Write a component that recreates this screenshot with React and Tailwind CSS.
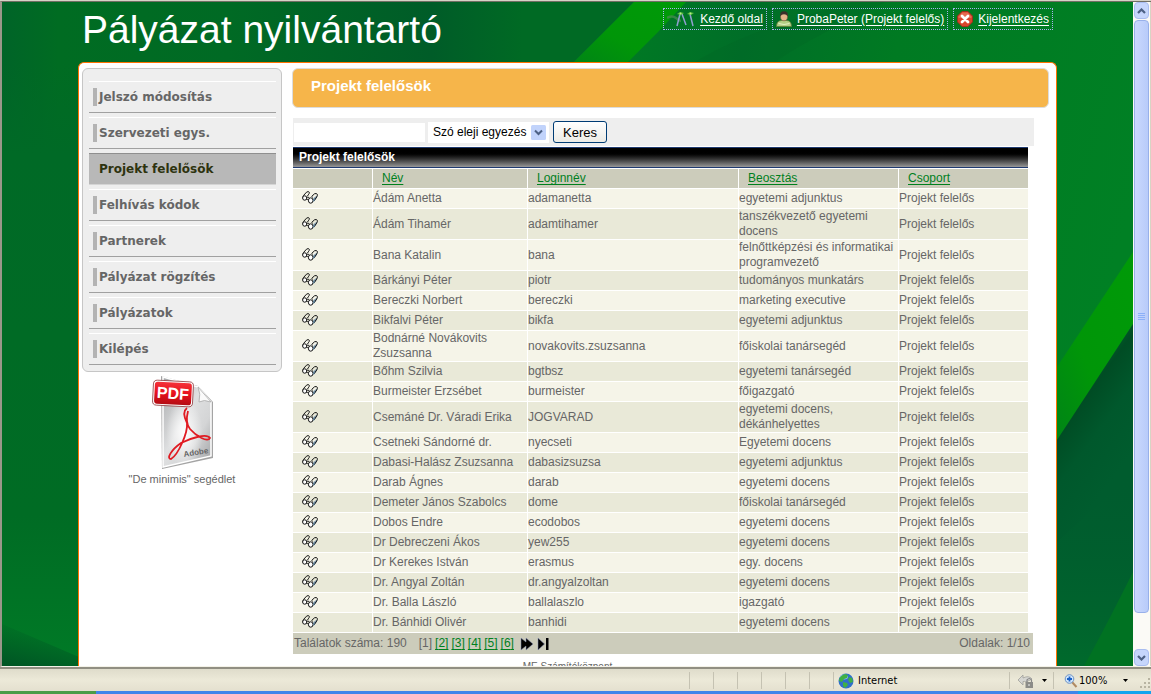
import { useState } from 'react';

const menuItems = [
  'Jelszó módosítás',
  'Szervezeti egys.',
  'Projekt felelősök',
  'Felhívás kódok',
  'Partnerek',
  'Pályázat rögzítés',
  'Pályázatok',
  'Kilépés',
];

const columns = ['Név', 'Loginnév', 'Beosztás', 'Csoport'];

const people = [
  { name: 'Ádám Anetta', login: 'adamanetta', post: 'egyetemi adjunktus' },
  { name: 'Ádám Tihamér', login: 'adamtihamer', post: 'tanszékvezető egyetemi docens' },
  { name: 'Bana Katalin', login: 'bana', post: 'felnőttképzési és informatikai programvezető' },
  { name: 'Bárkányi Péter', login: 'piotr', post: 'tudományos munkatárs' },
  { name: 'Bereczki Norbert', login: 'bereczki', post: 'marketing executive' },
  { name: 'Bikfalvi Péter', login: 'bikfa', post: 'egyetemi adjunktus' },
  { name: 'Bodnárné Novákovits Zsuzsanna', login: 'novakovits.zsuzsanna', post: 'főiskolai tanársegéd' },
  { name: 'Bőhm Szilvia', login: 'bgtbsz', post: 'egyetemi tanársegéd' },
  { name: 'Burmeister Erzsébet', login: 'burmeister', post: 'főigazgató' },
  { name: 'Csemáné Dr. Váradi Erika', login: 'JOGVARAD', post: 'egyetemi docens, dékánhelyettes' },
  { name: 'Csetneki Sándorné dr.', login: 'nyecseti', post: 'Egyetemi docens' },
  { name: 'Dabasi-Halász Zsuzsanna', login: 'dabasizsuzsa', post: 'egyetemi adjunktus' },
  { name: 'Darab Ágnes', login: 'darab', post: 'egyetemi docens' },
  { name: 'Demeter János Szabolcs', login: 'dome', post: 'főiskolai tanársegéd' },
  { name: 'Dobos Endre', login: 'ecodobos', post: 'egyetemi docens' },
  { name: 'Dr Debreczeni Ákos', login: 'yew255', post: 'egyetemi docens' },
  { name: 'Dr Kerekes István', login: 'erasmus', post: 'egy. docens' },
  { name: 'Dr. Angyal Zoltán', login: 'dr.angyalzoltan', post: 'egyetemi docens' },
  { name: 'Dr. Balla László', login: 'ballalaszlo', post: 'igazgató' },
  { name: 'Dr. Bánhidi Olivér', login: 'banhidi', post: 'egyetemi docens' },
];

function LeafBackground() {
  return (
    <svg
      className="absolute inset-0 w-full h-full"
      viewBox="0 0 1131 664"
      preserveAspectRatio="none"
      aria-hidden="true"
    >
      <defs>
        <linearGradient id="base" x1="0" y1="0" x2="1" y2="0">
          <stop offset="0" stopColor="#006428" />
          <stop offset="0.05" stopColor="#006c22" />
          <stop offset="0.2" stopColor="#006a24" />
          <stop offset="0.38" stopColor="#005c28" />
          <stop offset="0.46" stopColor="#006a24" />
        </linearGradient>
        <linearGradient id="leftSide" x1="0" y1="0" x2="0" y2="1">
          <stop offset="0" stopColor="#006a26" stopOpacity="0" />
          <stop offset="0.15" stopColor="#006a26" />
          <stop offset="0.75" stopColor="#006c24" />
          <stop offset="1" stopColor="#007a26" />
        </linearGradient>
        <linearGradient id="right" x1="0" y1="0" x2="1" y2="0.3">
          <stop offset="0" stopColor="#007f22" />
          <stop offset="0.3" stopColor="#006e28" />
          <stop offset="0.55" stopColor="#007a22" />
          <stop offset="1" stopColor="#008024" />
        </linearGradient>
        <linearGradient id="blade" x1="1" y1="0" x2="0" y2="1">
          <stop offset="0" stopColor="#009a08" />
          <stop offset="0.6" stopColor="#009608" />
          <stop offset="1" stopColor="#008416" />
        </linearGradient>
        <linearGradient id="shade" gradientUnits="userSpaceOnUse" x1="1050" y1="390" x2="1131" y2="450">
          <stop offset="0" stopColor="#00762a" />
          <stop offset="0.3" stopColor="#004c24" />
          <stop offset="0.6" stopColor="#00582c" />
          <stop offset="1" stopColor="#005c2e" />
        </linearGradient>
        <linearGradient id="low" x1="0" y1="0" x2="0" y2="1">
          <stop offset="0" stopColor="#005c2e" stopOpacity="0" />
          <stop offset="1" stopColor="#006a2c" />
        </linearGradient>
        <linearGradient id="corner" x1="0" y1="1" x2="0.4" y2="0">
          <stop offset="0" stopColor="#005424" />
          <stop offset="1" stopColor="#005424" stopOpacity="0" />
        </linearGradient>
      </defs>
      <rect width="1131" height="664" fill="url(#base)" />
      <rect y="62" width="77" height="602" fill="url(#leftSide)" />
      <path d="M0 622L77 655V664H0z" fill="url(#corner)" />
      <path d="M632 0H1131V664H1055V62H570z" fill="url(#right)" />
      <path d="M632 0H684L656 30L624 62H570z" fill="url(#blade)" />
      <path d="M690 62Q740 30 850 0H884Q800 40 770 62z" fill="#006824" opacity="0.35" />
      <path d="M1131 250V322L1055 440V365z" fill="url(#blade)" />
      <path d="M1131 322V664H1055V438z" fill="url(#shade)" />
      <path d="M1131 470V664H1055V540z" fill="url(#low)" />
      <path d="M1131 570V664H1082Q1102 628 1131 570z" fill="#007222" />
    </svg>
  );
}

function PathIcon() {
  return (
    <svg className="w-7 h-4" viewBox="0 0 28 16" aria-hidden="true">
      <path d="M0 7Q5 4 9 7T14 10" stroke="#4d8a55" strokeWidth="2.500" fill="none" opacity="0.7" />
      <path d="M13 3L10 15M15 3L19 14M23 3L26 15" stroke="#8f9fcf" strokeWidth="1.500" fill="none" />
      <path d="M10 3l3-2 4 1-3 2zM20 3l3-2 4 1-3 2z" fill="#59bf3c" />
      <circle cx="13.500" cy="2.500" r="1" fill="#b7ee8b" />
      <circle cx="23.500" cy="2.500" r="1" fill="#b7ee8b" />
    </svg>
  );
}

function UserIcon() {
  return (
    <svg className="w-4 h-4" viewBox="0 0 16 16" aria-hidden="true">
      <path d="M.500 15.500q0-6 5-6h5q5 0 5 6z" fill="#b3cf86" stroke="#5d7d3a" strokeWidth="0.8" />
      <path d="M2.500 12.500q5.500 2 11 0" stroke="#e4f0c6" fill="none" />
      <ellipse cx="8" cy="5.500" rx="3.500" ry="4.300" fill="#e3b58a" stroke="#7b5a3c" strokeWidth="0.6" />
      <path d="M4.200 5.500Q3.500 .3 8 .3T11.800 5.500Q10.500 3.300 8 3.300T4.200 5.500z" fill="#38302b" />
    </svg>
  );
}

function LogoutIcon() {
  return (
    <svg className="w-4 h-4" viewBox="0 0 16 16" aria-hidden="true">
      <path d="M5 .5h6L15.500 5v6L11 15.500H5L.5 11V5z" fill="#d9442c" stroke="#a22a1c" strokeWidth="0.8" />
      <path d="M5.300 1.500h5.400L14.500 5.400V7h-13V5.400z" fill="#ea7a62" opacity="0.7" />
      <path d="M5 5l6 6M11 5l-6 6" stroke="#fff" strokeWidth="2.800" strokeLinecap="round" />
    </svg>
  );
}

function GlassesIcon() {
  return (
    <svg className="w-4 h-[13px]" viewBox="0 0 16 13" aria-hidden="true">
      <path d="M11.500 7l3.500-2.500v2L12 10.500z" fill="#8aa5b8" />
      <path
        d="M.700 6.500L1.500 4.500L4.500 1.200Q6.500-.2 7.300 1.300Q7.500 2.500 6.300 3.800L5.500 5M10.500 6.500L9.800 5.300L12.500 2.800Q14.500 2 15.300 3.300Q15.700 4.800 14.700 6L12 10"
        fill="none"
        stroke="#111"
      />
      <ellipse cx="2.700" cy="7" rx="2.100" ry="2.200" fill="#fff" stroke="#111" />
      <ellipse cx="8.700" cy="9.500" rx="2.300" ry="2.700" fill="#fff" stroke="#111" />
      <path d="M4.700 6.500Q6.500 5 7.200 7.200M4.500 8.500Q5.800 8 6.500 9.500" stroke="#111" strokeWidth="0.9" fill="none" />
      <path d="M11 8l1.800-1v2.500l-1.800 1.500z" fill="#5e7c90" />
    </svg>
  );
}

function PdfIcon() {
  return (
    <svg className="w-[64px] h-[94px]" viewBox="0 0 64 94" aria-hidden="true">
      <defs>
        <linearGradient id="page" x1="0" y1="0" x2="1" y2="1">
          <stop offset="0" stopColor="#a4a6a8" />
          <stop offset="0.45" stopColor="#dfe0e1" />
          <stop offset="0.7" stopColor="#d4d5d6" />
          <stop offset="1" stopColor="#9c9ea0" />
        </linearGradient>
        <radialGradient id="glow" cx="0.45" cy="0.62" r="0.38">
          <stop offset="0" stopColor="#fff" />
          <stop offset="1" stopColor="#fff" stopOpacity="0" />
        </radialGradient>
        <linearGradient id="tag" x1="0" y1="0" x2="0" y2="1">
          <stop offset="0" stopColor="#f4323a" />
          <stop offset="0.5" stopColor="#e8101c" />
          <stop offset="1" stopColor="#b30d14" />
        </linearGradient>
      </defs>
      <path d="M11 1L48 11L63 27V83L12 94z" fill="#7e7e7e" opacity="0.7" />
      <path d="M13 2L48 12L61 27V81L13 92z" fill="url(#page)" stroke="#fff" strokeWidth="1.500" />
      <path d="M13 2L48 12L61 27V81L13 92z" fill="url(#glow)" />
      <path d="M48 12L61 27Q54 24 49 27Q51 19 48 12z" fill="#fafafa" stroke="#a9a9a9" strokeWidth="0.8" />
      <path
        d="M37 33C33 36 34 42 37 48C38 58 28 80 21 84C16 84 21 75 31 68C41 63 57 58 60 63C58 68 46 61 40 54C35 48 37 40 38 36"
        fill="none"
        stroke="#e01b22"
        strokeWidth="1.800"
      />
      <rect x="3" y="6" width="40" height="25" rx="4" transform="rotate(3 23 18)" fill="#fff" stroke="#7d1b1e" strokeWidth="0.7" />
      <rect x="4.500" y="7.500" width="37" height="22" rx="3" transform="rotate(3 23 18)" fill="url(#tag)" />
      <text x="7" y="24" fontSize="16" fontWeight="bold" fill="#fff" transform="rotate(4 23 18)" fontFamily="Liberation Sans, sans-serif">
        PDF
      </text>
      <text x="34" y="82" fontSize="8" fontWeight="bold" fill="#666" transform="rotate(-9 34 82)" fontFamily="Liberation Sans, sans-serif">
        Adobe
      </text>
    </svg>
  );
}

function TopLink({ icon, children }) {
  return (
    <a
      href="#"
      className="flex items-center h-[22px] px-[3px] gap-[5px] border border-dotted border-[#a8b4f0] text-white whitespace-nowrap"
    >
      {icon}
      <span className="underline underline-offset-2">{children}</span>
    </a>
  );
}

function Sidebar() {
  return (
    <aside className="w-[200px] shrink-0">
      <nav className="rounded-md border border-[#c6c6c6] bg-[#eeeeee] pl-[6px] pr-[5px] pt-3 pb-[6px]">
        <ul className="flex flex-col gap-1 font-['DejaVu_Sans',sans-serif] text-[12px] font-bold">
          {menuItems.map((item) => {
            const active = item === 'Projekt felelősök';
            return (
              <li key={item}>
                <a
                  href="#"
                  className={
                    active
                      ? 'flex items-center h-8 pl-[10px] border-t border-b border-t-[#8f8f8f] border-b-[#d5d5d5] bg-[#b8b8b8] text-[#2e330f]'
                      : 'flex items-center h-8 pl-1 border-t border-b border-t-white border-b-[#a0a0a0] text-[#666666]'
                  }
                >
                  {!active && <span className="w-1 h-[18px] mr-[2px] bg-[#b3b3b3]" />}
                  {item}
                </a>
              </li>
            );
          })}
        </ul>
      </nav>
      <a href="#" className="flex flex-col items-center pt-[3px] text-[11px] text-[#666666]">
        <PdfIcon />
        <span className="leading-[20px]">"De minimis" segédlet</span>
      </a>
    </aside>
  );
}

function SearchBar() {
  const [query, setQuery] = useState('');

  return (
    <form className="flex items-center h-7 bg-[#eeeeee] pl-px text-black text-[13px]" onSubmit={(e) => e.preventDefault()}>
      <input
        type="text"
        aria-label="Keresés"
        className="w-[131px] h-[19px] px-1 bg-white outline-none"
        value={query}
        onChange={(e) => setQuery(e.target.value)}
      />
      <div className="relative ml-[3px]">
        <select
          aria-label="Egyezés módja"
          className="block w-[121px] h-[21px] pl-[5px] appearance-none bg-white text-[12px] outline-none"
        >
          <option>Szó eleji egyezés</option>
        </select>
        <svg className="absolute right-[3px] top-[3px] w-[15px] h-[15px] pointer-events-none" viewBox="0 0 15 15" aria-hidden="true">
          <rect width="15" height="15" rx="1.500" fill="#c1d3fb" />
          <path d="M4 5.500L7.500 9L11 5.500" fill="none" stroke="#4d6185" strokeWidth="2" />
        </svg>
      </div>
      <button
        type="submit"
        className="w-[54px] h-[22px] ml-1 rounded-[3px] border border-[#003c74] bg-gradient-to-b from-white to-[#ecebe5] leading-none"
      >
        Keres
      </button>
    </form>
  );
}

function PeopleTable() {
  return (
    <table className="w-full table-fixed border-separate border-spacing-0">
      <caption className="h-[21px] mb-px pl-[6px] border-y border-[#1f3a70] bg-gradient-to-b from-black from-20% to-[#999999] text-left font-bold leading-[19px] text-white">
        Projekt felelősök
      </caption>
      <colgroup>
        <col className="w-[80px]" />
        <col className="w-[155px]" />
        <col className="w-[211px]" />
        <col className="w-[160px]" />
        <col />
      </colgroup>
      <thead>
        <tr className="bg-[#ccccbb]">
          <th className="h-5 border-r border-b border-white" />
          {columns.map((column) => (
            <th
              key={column}
              className="h-5 p-0 pl-[9px] border-r border-b border-white last:border-r-0 text-left font-normal"
            >
              <a href="#" className="text-[#00801e] underline underline-offset-2">
                {column}
              </a>
            </th>
          ))}
        </tr>
      </thead>
      <tbody>
        {people.map((person) => (
          <tr key={person.login} className="odd:bg-[#f5f4e8] even:bg-[#e9e9d8]">
            <td className="h-5 p-0 pb-[2px] pl-[9px] border-r border-b border-white">
              <a href="#" aria-label={person.name} className="block w-4">
                <GlassesIcon />
              </a>
            </td>
            <td className="p-0 border-r border-b border-white">{person.name}</td>
            <td className="p-0 border-r border-b border-white">{person.login}</td>
            <td className="p-0 border-r border-b border-white">{person.post}</td>
            <td className="p-0 border-b border-white">Projekt felelős</td>
          </tr>
        ))}
      </tbody>
    </table>
  );
}

function Pager() {
  return (
    <div className="flex items-center h-[21px] mr-px pl-px pr-[3px] bg-[#ccccbb]">
      <span>Találatok száma: 190</span>
      <span className="ml-3">[1]</span>
      {[2, 3, 4, 5, 6].map((page) => (
        <a key={page} href="#" className="ml-[3px] text-[#00801e] underline underline-offset-2">
          [{page}]
        </a>
      ))}
      <a href="#" aria-label="Következő" className="ml-[6px]">
        <svg className="w-[13px] h-[14px]" viewBox="0 0 13 14">
          <path d="M1 1L6 5V1L13 7L6 13V9L1 13z" fill="#000" stroke="#8790b8" strokeWidth="0.5" />
        </svg>
      </a>
      <a href="#" aria-label="Utolsó" className="ml-[4px]">
        <svg className="w-[12px] h-[14px]" viewBox="0 0 12 14">
          <path d="M1 1L7.500 7L1 13z" fill="#000" stroke="#8790b8" strokeWidth="0.5" />
          <path d="M9 1h2.500v12H9z" fill="#000" />
        </svg>
      </a>
      <span className="ml-auto">Oldalak: 1/10</span>
    </div>
  );
}

function ScrollButton({ label, path }) {
  return (
    <button
      type="button"
      aria-label={label}
      className="flex items-center justify-center w-[15px] h-[17px] shrink-0 rounded-sm border border-[#a9bdf0] bg-[#c6d6fc]"
    >
      <svg className="w-[9px] h-[6px]" viewBox="0 0 9 6">
        <path d={path} fill="none" stroke="#4d6185" strokeWidth="2.200" />
      </svg>
    </button>
  );
}

function Scrollbar() {
  return (
    <div className="flex flex-col items-center w-[18px] shrink-0 border-r border-[#d8d4c4] bg-[#fbfaf6]">
      <ScrollButton label="Fel" path="M1 5L4.500 1.500L8 5" />
      <div className="flex-1 w-[15px] pt-px pb-9">
        <div className="flex flex-col items-center justify-center gap-px h-full rounded-sm border border-[#98b0ea] bg-gradient-to-r from-[#cad8fd] to-[#b8cbfa]">
          {[0, 1, 2, 3].map((line) => (
            <span key={line} className="w-[7px] h-px bg-[#8cb0f8]" />
          ))}
        </div>
      </div>
      <ScrollButton label="Le" path="M1 1L4.500 4.500L8 1" />
    </div>
  );
}

function DropArrow() {
  return (
    <svg className="w-[5px] h-[3px]" viewBox="0 0 5 3" aria-hidden="true">
      <path d="M0 0h5L2.500 3z" fill="#000" />
    </svg>
  );
}

function StatusBar() {
  return (
    <footer className="shrink-0 font-['DejaVu_Sans_Condensed','DejaVu_Sans',sans-serif] text-[11px] text-black">
      <div className="flex justify-end items-center h-6 pt-px border-t-2 border-[#918f82] bg-gradient-to-b from-[#dfdccb] via-[#ece9d8] to-[#e4e0cf]">
        {[0, 1, 2, 3, 4, 5].map((cell) => (
          <span key={cell} className="w-6 h-[17px] border-l border-[#c5c2b2]" />
        ))}
        <div className="flex items-center w-[176px] h-[17px] pl-1 gap-1 border-l border-[#c5c2b2]">
          <svg className="w-4 h-4" viewBox="0 0 16 16" aria-hidden="true">
            <circle cx="8" cy="8" r="7.500" fill="#2f6fcb" />
            <ellipse cx="6" cy="4" rx="4" ry="2.500" fill="#a6d0f5" opacity="0.8" />
            <path d="M7 1l3 1-1 3-3 1-2 3-3-1Q1 3 7 1zM11 4l3 1 1 4-3 1-2-3zM5 9l4 1 1 2-3 3-2-2z" fill="#3fb043" />
          </svg>
          Internet
        </div>
        <button type="button" aria-label="Védett mód" className="flex items-center w-[44px] h-[17px] pl-2 gap-2 border-l border-[#c5c2b2]">
          <svg className="w-4 h-4" viewBox="0 0 16 16" aria-hidden="true">
            <path d="M0 7l5-5v3Q11 2 14 6L8 9Q7 8 5 8.500V12z" fill="#d6d6d2" stroke="#a0a09a" strokeWidth="0.8" />
            <path d="M9 9V7q2.500-3 4.500 0v2" fill="none" stroke="#888" strokeWidth="1.200" />
            <rect x="7.500" y="9" width="7.500" height="6" fill="#8c8c88" />
            <path d="M11 11v2" stroke="#eee" />
          </svg>
          <DropArrow />
        </button>
        <button type="button" className="relative flex items-center w-[98px] h-[17px] pl-[10px] border-l border-[#c5c2b2]">
          <svg className="w-[14px] h-[14px] mr-px" viewBox="0 0 14 14" aria-hidden="true">
            <path d="M8 8l4.500 5" stroke="#b08a62" strokeWidth="2" />
            <circle cx="5.500" cy="5" r="4.300" fill="#cfe4fb" stroke="#6d93c4" />
            <path d="M5.500 2.500v5M3 5h5" stroke="#1d62c8" strokeWidth="1.800" />
          </svg>
          100%
          <span className="ml-4">
            <DropArrow />
          </span>
          <svg className="absolute right-0 bottom-0 w-[12px] h-[12px]" viewBox="0 0 12 12" aria-hidden="true">
            <path d="M9 1h2v2H9zM5 5h2v2H5zM9 5h2v2H9zM1 9h2v2H1zM5 9h2v2H5zM9 9h2v2H9z" fill="#b8b4a2" />
          </svg>
        </button>
      </div>
      <div className="flex h-[3px]">
        <div className="w-24 bg-[#4a9c47]" />
        <div className="flex-1 bg-[#3f85ea]" />
        <div className="w-[73px] bg-[#14a4ee]" />
      </div>
    </footer>
  );
}

export default function App() {
  return (
    <div className="flex flex-col h-screen overflow-hidden border-t border-[#d6d3c6] bg-[#ece9d8] font-['Liberation_Sans',Arial,sans-serif] text-[12px] leading-[15px] text-[#666666]">
      <div className="flex flex-1 min-h-0 border-t border-l-2 border-b border-t-[#716f64] border-l-[#9a978a] border-b-[#f4f2e8]">
        <div className="relative flex-1 min-w-0 overflow-hidden">
          <LeafBackground />
          <div className="relative max-w-[979px] mx-auto">
            <header className="flex justify-between items-start h-[60px] px-1 pt-[6px]">
              <h1 className="text-[39px] leading-[44px] text-white whitespace-nowrap">Pályázat nyilvántartó</h1>
              <div className="flex gap-[5px]">
                <TopLink icon={<PathIcon />}>Kezdő oldal</TopLink>
                <TopLink icon={<UserIcon />}>ProbaPeter (Projekt felelős)</TopLink>
                <TopLink icon={<LogoutIcon />}>Kijelentkezés</TopLink>
              </div>
            </header>
            <div className="rounded-t-md border border-b-0 border-[#ff7200] bg-white">
              <div className="flex gap-[10px] pl-[3px] pr-[7px] pt-[5px]">
                <Sidebar />
                <main className="flex-1 min-w-0">
                  <h2 className="h-10 pl-[18px] rounded-md border border-[#dcdcdc] bg-[#f6b54a] text-[15px] leading-[34px] font-bold text-white">
                    Projekt felelősök
                  </h2>
                  <div className="pt-[10px] pl-px pr-[15px]">
                    <SearchBar />
                    <div className="pt-px pr-[6px]">
                      <PeopleTable />
                    </div>
                    <Pager />
                  </div>
                </main>
              </div>
              <p className="pt-1 pb-8 text-center text-[10px] leading-[18px]">ME Számítóközpont</p>
            </div>
          </div>
        </div>
        <Scrollbar />
      </div>
      <StatusBar />
    </div>
  );
}
